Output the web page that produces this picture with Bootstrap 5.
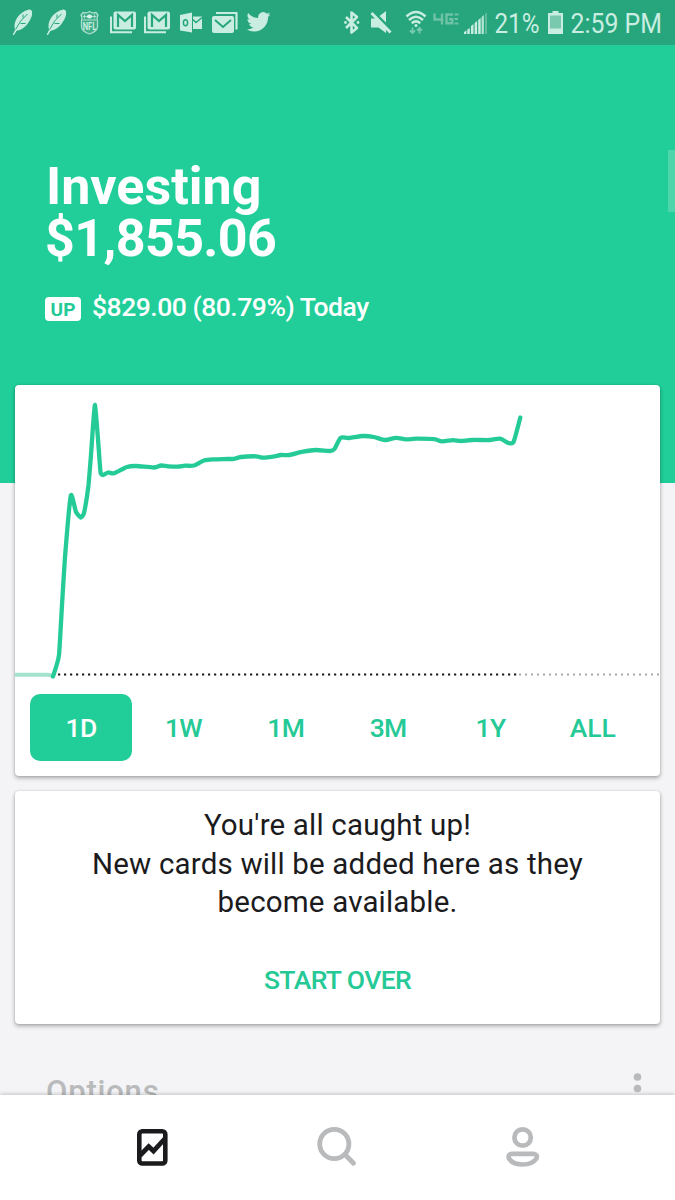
<!DOCTYPE html>
<html lang="en">
<head>
<meta charset="utf-8">
<meta name="viewport" content="width=device-width, initial-scale=1">
<title>Investing</title>
<link href="https://cdn.jsdelivr.net/npm/bootstrap@5.3.0/dist/css/bootstrap.min.css" rel="stylesheet">
<style>
:root{--brand:#21ce99;--brand-text:#24c996;--status:#27a57c;--ink:#1b1b1d;--muted:#b9babc}
body{font-family:Roboto,"Liberation Sans",sans-serif;background:#f4f4f6;color:var(--ink);margin:0}
svg{display:block;flex:none}
.screen{height:1200px;overflow:hidden}
.status-bar{height:45px;background:var(--status);padding-left:10px;padding-right:10px;color:#c9eee1}
.hero{height:438px;background:var(--brand);padding:116px 0 0 46px}
.hero h1{font-size:52px;line-height:52px;font-weight:700;margin:0}
.hero .t1{letter-spacing:0}
.hero .t2{letter-spacing:-.6px;margin-left:-1px}
.change{margin-top:26px;font-size:26.5px;line-height:32px;font-weight:500;letter-spacing:-.48px}
.up-tag{width:36px;height:24px;border-radius:4px;background:#fff;color:var(--brand-text);font-size:19px;font-weight:700;line-height:25px;letter-spacing:0;margin:3px 11px 0 -1px}
.scroll-thumb{right:0;top:150px;width:7px;height:62px;background:#4fd5aa}
.panel{border:0;border-radius:4px;margin:0 15px;box-shadow:0 2px 4px rgba(0,0,0,.32),0 0 2px rgba(0,0,0,.14)}
.chart-panel{height:391px;margin-top:-98px}
.ranges{padding:9px 16px 0 15px}
.ranges .btn{height:67px;border-radius:10px;border:0;padding:1px 0 0;font-size:26.5px;font-weight:500;letter-spacing:-.6px;color:var(--brand-text)}
.ranges .btn.active{background:var(--brand);color:#fff}
.ranges .btn:last-child{letter-spacing:0}
.note-panel{height:233px;margin-top:15px;padding-top:15px}
.note-panel p{font-size:29.5px;line-height:38.5px;letter-spacing:.18px;margin:0}
.start-over{color:var(--brand-text);font-size:26.5px;line-height:32px;font-weight:500;letter-spacing:-.6px;margin-top:42px}
.section-row{height:71px;padding:46px 0 0 46px;color:var(--muted);font-size:31px;line-height:44px;font-weight:500;letter-spacing:.8px;overflow:hidden}
.section-row svg{margin-top:-1px}
.tab-bar{height:105px;background:#fff;box-shadow:0 -1px 4px rgba(0,0,0,.2);position:relative}
.tab-bar a{width:185px;height:105px}
</style>
</head>
<body>
<div class="screen position-relative">
  <div class="status-bar d-flex justify-content-between">
    <div class="d-flex">
      <svg width="33" height="45" viewBox="10 0 33 45"><g id="feather"><path fill="#c9eee1" d="M12.6 35 15 30C12.5 22 18.500 12 29 9.500 32.500 9 33 13.500 31 18 28 25 22.500 30 16.600 30.800L14 35Z"/><path d="M15.500 29.500Q20 20 27.500 14M23 14.500v3.500M20.500 23.500h5" fill="none" stroke="#27a57c" stroke-width="1"/></g></svg>
      <svg width="33" height="45" viewBox="43 0 33 45"><use href="#feather" x="34"/></svg>
      <svg width="30" height="45" viewBox="76 0 30 45"><path d="M89.500 11.500Q87 13.500 83 12.500L81 15Q82.500 17 81.500 21V27Q81.500 31 89.500 34 97.500 31 97.500 27V21Q96.500 17 98 15L96 12.500Q92 13.500 89.500 11.500Z" fill="#3fae88" stroke="#a9dfcc" stroke-width="1.300"/><path d="M82.500 20H96.500" stroke="#a9dfcc"/><path d="M84.500 14.500v4M94.500 14.500v4M83 16.500h4M92 16.500h4" stroke="#a9dfcc" stroke-width="1"/><ellipse cx="89.500" cy="16.500" rx="2.600" ry="2" fill="#d8f3ea"/><text x="82.700" y="29.500" font-size="10.500" font-weight="700" fill="#c9eee1" textLength="13.600" lengthAdjust="spacingAndGlyphs">NFL</text></svg>
      <svg width="34" height="45" viewBox="106 0 34 45"><g id="gmail"><path d="M111 16.500V32.300H132" fill="none" stroke="#c9eee1" stroke-width="2"/><rect x="113.500" y="11.500" width="22.500" height="18" rx="2" fill="#c9eee1"/><path d="M118 27V15L125 21 132 15V27" fill="none" stroke="#27a57c" stroke-width="2.200"/></g></svg>
      <svg width="34" height="45" viewBox="140 0 34 45"><use href="#gmail" x="34"/></svg>
      <svg width="33" height="45" viewBox="174 0 33 45"><path d="M180 15 192 12.500V32.500L180 30.500ZM193 16.500H202V29H193Z" fill="#c9eee1"/><path d="M193 19.500 196 22.500 202 17.500" fill="none" stroke="#27a57c" stroke-width="1.500"/><ellipse cx="185.500" cy="22.700" rx="2.100" ry="3" fill="none" stroke="#27a57c" stroke-width="1.500"/></svg>
      <svg width="35" height="45" viewBox="207 0 35 45"><path d="M216 13H236.500V29.500" fill="none" stroke="#c9eee1" stroke-width="2.200" stroke-linejoin="round"/><rect x="212" y="16" width="22" height="17" rx="2" fill="#c9eee1"/><path d="M215 20 223 27 231 20" fill="none" stroke="#27a57c" stroke-width="2"/></svg>
      <svg width="34" height="45" viewBox="242 0 34 45"><path transform="translate(246.500 9.800)" fill="#c9eee1" d="M23.950 4.570a10 10 0 0 1-2.820.78 4.960 4.960 0 0 0 2.160-2.730c-.95.56-2 .96-3.130 1.190a4.920 4.920 0 0 0-8.380 4.480C7.690 8.100 4.070 6.130 1.640 3.160a4.820 4.820 0 0 0-.67 2.480c0 1.710.87 3.210 2.190 4.100a4.900 4.900 0 0 1-2.230-.62v.06a4.920 4.920 0 0 0 3.950 4.830 5 5 0 0 1-2.210.08 4.940 4.940 0 0 0 4.600 3.420A9.870 9.870 0 0 1 0 19.540a13.990 13.990 0 0 0 7.550 2.210c9.050 0 14-7.500 14-13.980 0-.21 0-.42-.02-.63a9.940 9.940 0 0 0 2.420-2.570Z"/></svg>
    </div>
    <div class="d-flex">
      <svg width="25" height="45" viewBox="340 0 25 45"><path d="M346 17 357 28 351.500 32.500V12.500L357 17 346 28" fill="none" stroke="#c9eee1" stroke-width="2.600" stroke-linejoin="round"/><circle cx="345.500" cy="22.500" r="1.400" fill="#c9eee1"/><circle cx="358" cy="22.500" r="1.400" fill="#c9eee1"/></svg>
      <svg width="35" height="45" viewBox="365 0 35 45"><path fill="#c9eee1" d="M371 18.500H377L386 27.500V33L378.500 27.500H371ZM379.500 16 386 11V22.500Z"/><path d="M371.500 13 390.500 32.500" stroke="#c9eee1" stroke-width="2.900"/></svg>
      <svg width="30" height="45" viewBox="400 0 30 45"><g fill="none" stroke="#c9eee1" stroke-width="2.500"><path d="M406.500 16.500Q416 7.500 425.500 16.500M409 20Q416 13.500 423 20M411.800 23.200Q416 19.500 420.200 23.200"/></g><circle cx="416" cy="25.500" r="1.500" fill="#c9eee1"/><path d="M412.500 27.500V33M410 30.500l2.500 2.500 2.500-2.500M419.500 33.500V28M417 30.500l2.500-2.500 2.500 2.500" fill="none" stroke="#75c9ad" stroke-width="1.800"/></svg>
      <svg width="32" height="45" viewBox="430 0 32 45"><g fill="none" stroke="#6ec3a7" stroke-width="2.400"><path d="M434.500 13.500V19.500H443.500M442 13.500V24.500M453 14.500H446.500V23.300H452.300V19.300H449"/><path d="M454.500 14.500H458.500M454.500 19H458M454.500 23.500H458.500" stroke-width="1.800"/></g></svg>
      <svg width="28" height="45" viewBox="462 0 28 45"><path fill="#c9eee1" d="M464 34v-2l2.400-1.500V34ZM467.300 34v-4.500l2.500-1.500V34ZM471 34v-8l2.500-2V34ZM474.600 34V23l2.500-2V34ZM478.200 34V20l2.500-2V34Z"/><path fill="#b2e5d4" d="M481.600 34V17l2.300-2V34Z"/><path fill="#60bc9c" d="M485 34V14l2-1.500V34Z"/></svg>
      <svg width="53" height="45" viewBox="490 0 53 45"><text x="494.500" y="33" font-size="28" fill="#c9eee1" textLength="45" lengthAdjust="spacingAndGlyphs">21%</text></svg>
      <svg width="27" height="45" viewBox="543 0 27 45"><path d="M552.500 11h6v2h4.500V34h-15V13h4.500Z" fill="#c9eee1"/><path d="M550 15.500h11V28.500H550Z" fill="#79c9ae"/></svg>
      <svg width="95" height="45" viewBox="570 0 95 45"><text x="570.500" y="33" font-size="28" fill="#c9eee1" textLength="91.500" lengthAdjust="spacingAndGlyphs">2:59 PM</text></svg>
    </div>
  </div>

  <header class="hero text-white">
    <h1><span class="t1">Investing</span><br><span class="t2">$1,855.06</span></h1>
    <div class="change d-flex align-items-center"><span class="up-tag text-center">UP</span><span>$829.00 (80.79%) Today</span></div>
  </header>
  <div class="scroll-thumb position-absolute"></div>

  <main>
    <section class="card panel chart-panel">
      <svg width="645" height="300" viewBox="15 385 645 300" fill="none">
        <path d="M54 674.500H517" stroke="#1b1b1d" stroke-width="2.200" stroke-dasharray="2.200 3.800" stroke-dashoffset="-4"/>
        <path d="M519 674.500H660" stroke="#a9a9ab" stroke-width="2" stroke-dasharray="2 4"/>
        <path d="M15 674.700H46Q50 674.700 53 676" stroke="#a3e2cd" stroke-width="4"/>
        <path id="price-line" stroke="#24cb97" stroke-width="4.300" stroke-linecap="round" stroke-linejoin="round"/>
      </svg>
      <div class="ranges d-flex">
        <button class="btn active flex-fill w-100">1D</button>
        <button class="btn flex-fill w-100">1W</button>
        <button class="btn flex-fill w-100">1M</button>
        <button class="btn flex-fill w-100">3M</button>
        <button class="btn flex-fill w-100">1Y</button>
        <button class="btn flex-fill w-100">ALL</button>
      </div>
    </section>

    <section class="card panel note-panel text-center">
      <p>You're all caught up!<br>New cards will be added here as they<br>become available.</p>
      <a class="start-over text-decoration-none" href="#">START OVER</a>
    </section>

    <section class="section-row d-flex justify-content-between">
      <span>Options</span>
      <svg width="76" height="50" viewBox="599 1069 76 50"><g fill="#b9babc"><circle cx="637.500" cy="1077" r="3.800"/><circle cx="637.500" cy="1088.500" r="3.800"/></g></svg>
    </section>
  </main>

  <nav class="tab-bar d-flex justify-content-center">
    <a href="#" aria-label="Portfolio"><svg width="185" height="105" viewBox="60 1095 185 105" fill="none" stroke="#1b1b1d"><rect x="139.300" y="1131.300" width="26" height="32.200" rx="3" stroke-width="4.600"/><path d="M140 1155.500 148.700 1146.500 153.500 1151 165 1138.500" stroke-width="4.800"/></svg></a>
    <a href="#" aria-label="Search"><svg width="185" height="105" viewBox="245 1095 185 105" fill="none" stroke="#b9babc" stroke-width="4.800"><circle cx="334.300" cy="1144" r="14.600"/><path d="M345 1154.500 353.500 1163.200" stroke-linecap="round"/></svg></a>
    <a href="#" aria-label="Account"><svg width="185" height="105" viewBox="430 1095 185 105" fill="none" stroke="#b9babc" stroke-width="4.700"><circle cx="522.600" cy="1137.500" r="8.200"/><path d="M512 1153.800H533.500Q538 1154.500 536.500 1158.500C531 1166.500 514 1166.500 509 1158.500Q507.500 1154.500 512 1153.800Z"/></svg></a>
  </nav>
</div>
<script src="https://cdn.jsdelivr.net/npm/bootstrap@5.3.0/dist/js/bootstrap.bundle.min.js"></script>
<script>
// Intraday samples, smoothed into a single curve
const pts=[[53,676.5],[59,655],[62,605],[65,557],[70.8,495.5],[76,512],[81,517.5],[84,513],[88.500,485],[91,455],[95,405],[100.500,472],[103,475],[108,472.5],[114,473.3],[127,467],[136,466],[154,467.5],[161,465.5],[168,466.3],[178,466.7],[185,465.7],[194,465.5],[204,460.5],[215,459.3],[227,459],[234,458.8],[241,457],[256,456.300],[263,457.700],[273,456.700],[281,455],[289,455],[303,451.7],[316,450],[330,451],[334.500,449],[340.500,438],[349,438],[363,436],[374,437],[385,440],[396,437.8],[406,439.300],[416,438.7],[434,439.200],[442,441.300],[453,440.200],[461,441],[472,440],[490,440],[500,438.6],[508,442.8],[513.500,442],[520.300,417.5]];
let d=`M${pts[0]}`;
for(let i=0;i<pts.length-1;i++){
  const a=pts[i-1]||pts[i],b=pts[i],c=pts[i+1],e=pts[i+2]||c;
  const k=Math.min(1,(c[0]-b[0])/8)*.14;
  d+=`C${b[0]+(c[0]-a[0])*k} ${b[1]+(c[1]-a[1])*k} ${c[0]-(e[0]-b[0])*k} ${c[1]-(e[1]-b[1])*k} ${c}`;
}
document.getElementById('price-line').setAttribute('d',d);
</script>
</body>
</html>
